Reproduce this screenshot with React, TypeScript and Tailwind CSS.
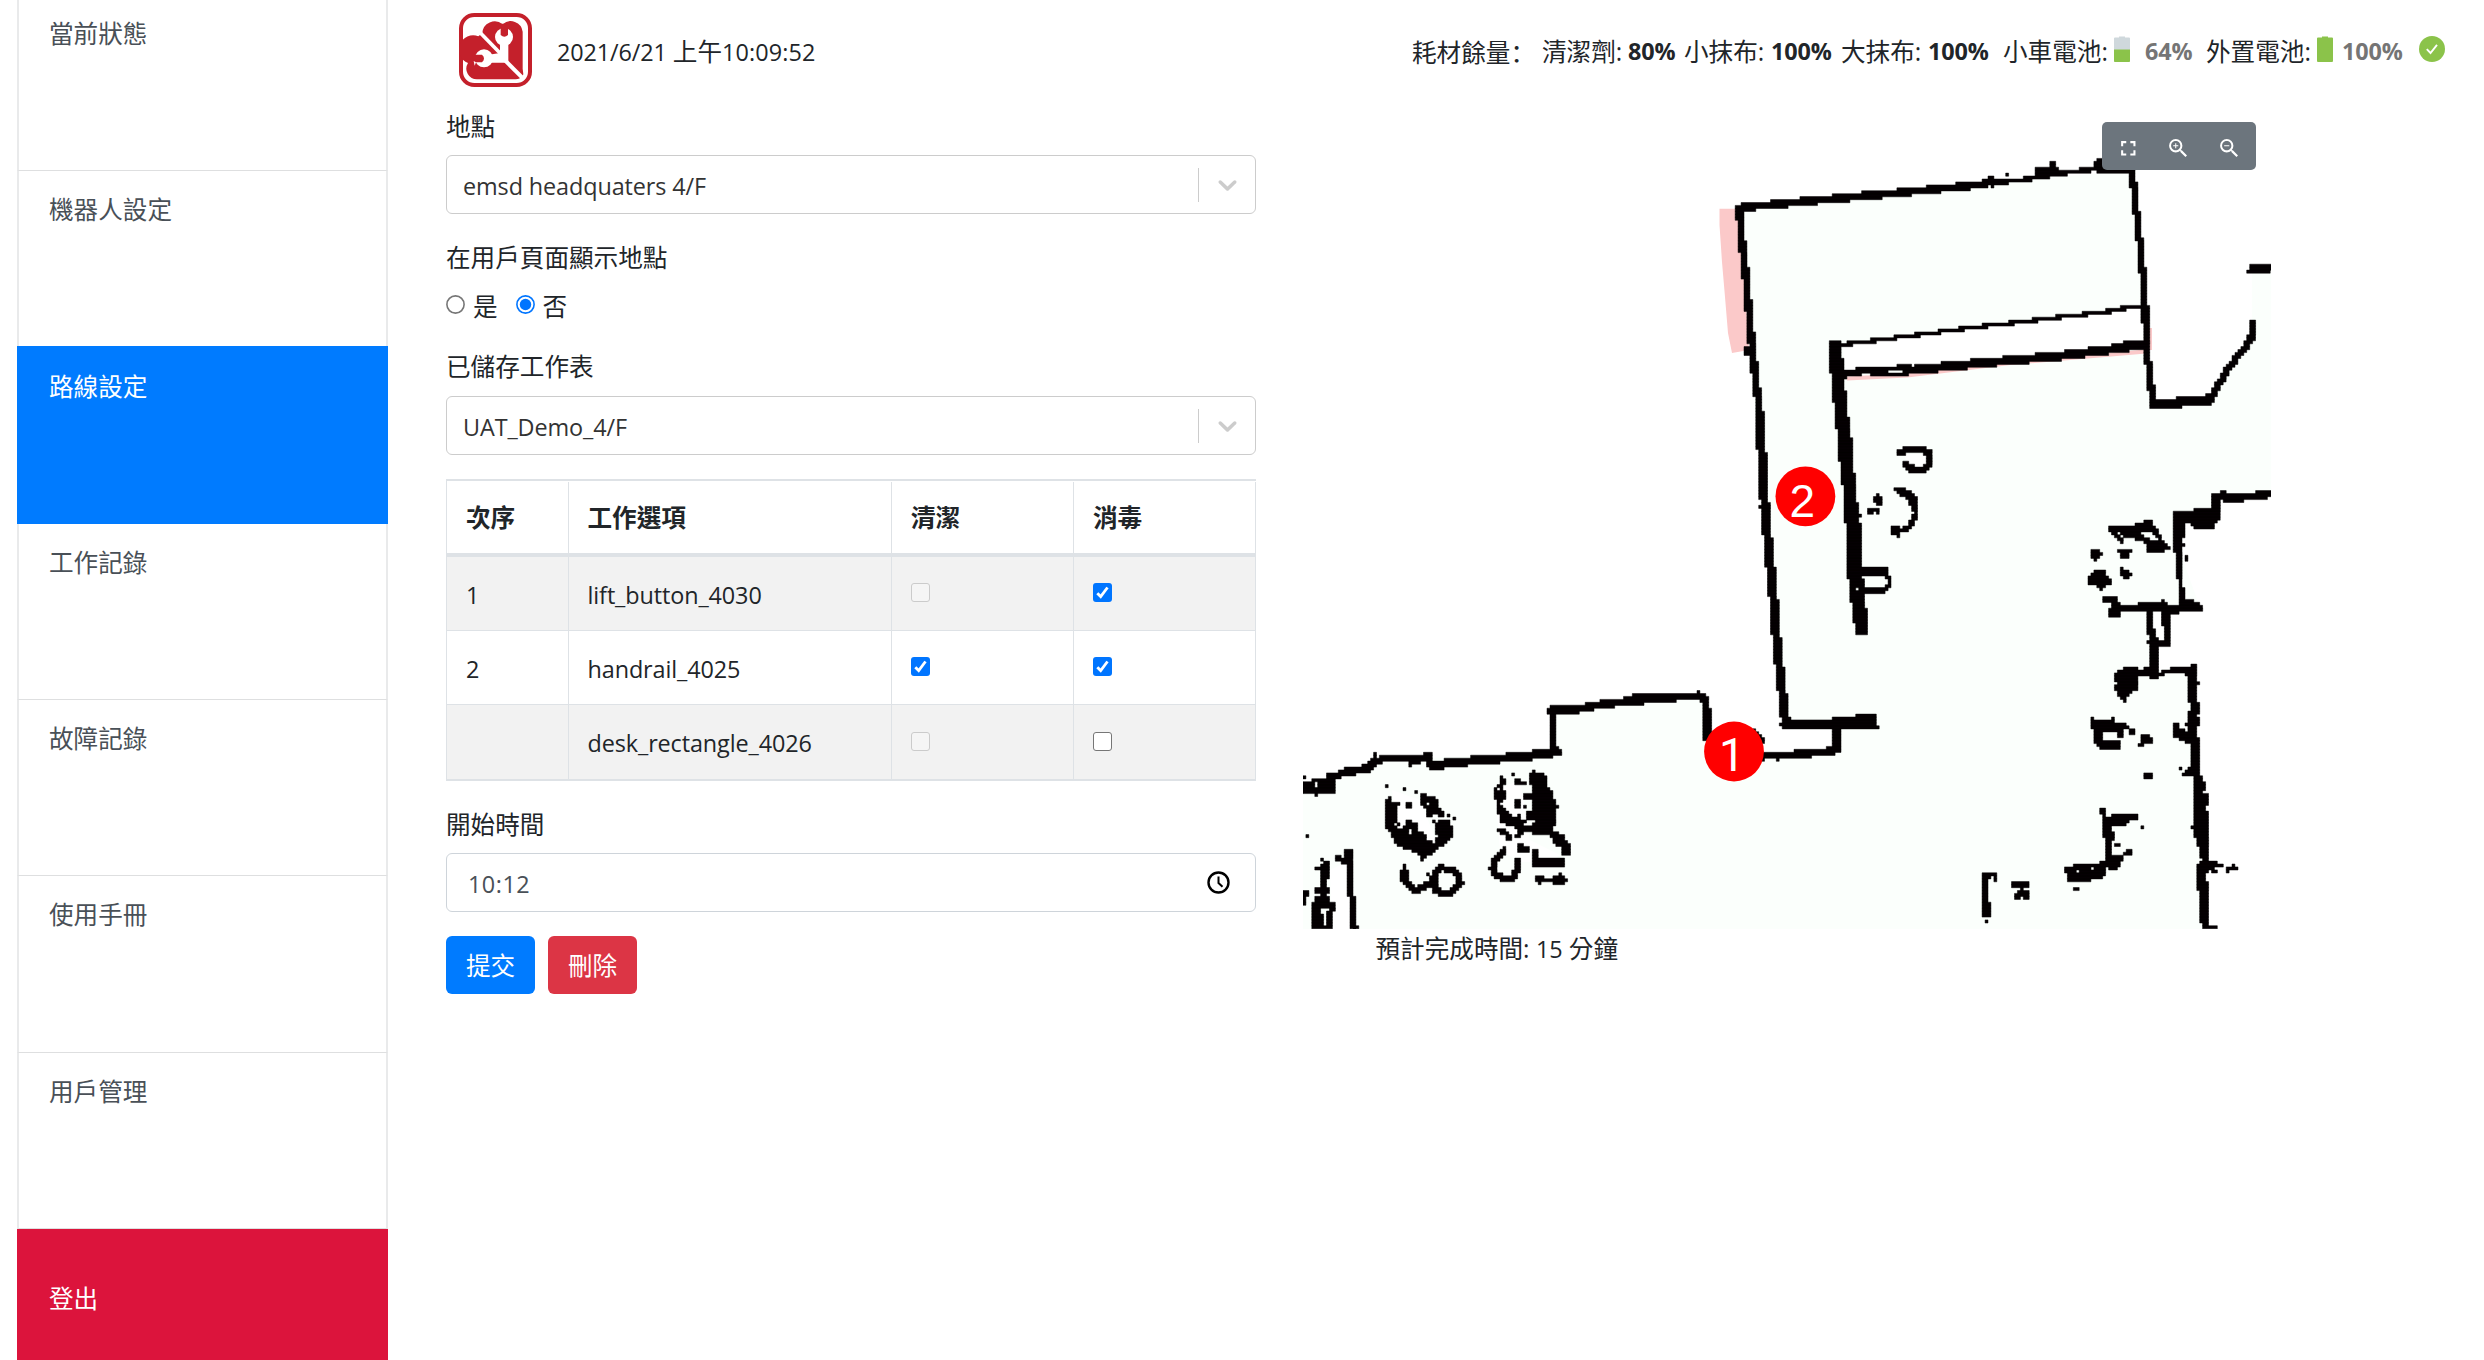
import React from "react";
import { MdFullscreen, MdZoomIn, MdZoomOut } from "react-icons/md";

/* ---------- floor map: shapes are rasterised onto the scanner's coarse grid ---------- */

type Layer = { ox: number; oy: number; kx: number; ky: number; shapes: string[] };

// L = wall (first number is its thickness), P = solid outline, R = box (x1 y1 x2 y2), D = single dot, E = cleared outline
const LAYERS: Layer[] = [
  {
    ox: 1700, oy: 110, kx: 0.3763, ky: 1 / 3,
    shapes: [
      "L 7 100 294 300 272 540 247 760 222",
      "L 4 760 220 860 209 960 190 1050 176",
      "L 6 1060 180 1150 184",
      "P 752 205 785 198 780 212 740 225",
      "P 888 170 930 168 932 153 950 153 945 175 957 178 940 202 890 204",
      "P 1045 155 1060 143 1075 143 1075 182 1050 182",
      "D 820 193", "D 433 245", "D 780 230",
      "L 6 1148 184 1160 310 1168 390 1182 560 1186 700 1195 800 1205 885",
      "R 1170 625 1182 641",
      "L 9 1207 883 1300 875 1355 868",
      "L 6 1358 865 1400 780 1450 710 1466 675",
      "L 3 1468 690 1468 635",
      "P 1448 492 1465 463 1520 463 1520 480 1500 492",
      "L 3.2 380 704 700 656 1130 598", "L 3 1120 593 1185 593",
      "L 8 388 790 555 781 700 764 950 738 1120 714 1188 702",
      "R 1125 690 1185 718", "R 525 760 560 785",
      "E 430 786 452 786 452 794 430 794", "E 500 777 540 777 540 786 500 786",
      "P 343 688 375 688 378 740 388 860 400 985 412 1125 420 1200 385 1200 378 1105 370 1020 360 935 352 845 345 755",
      "L 6.5 104 294 112 400 122 500 130 600 138 700 147 800 158 900 166 1020 172 1150",
      "R 114 712 140 740",
    ],
  },
  {
    ox: 1700, oy: 420, kx: 0.3763, ky: 1 / 3,
    shapes: [
      "P 360 -10 368 95 377 175 384 270 390 355 392 460 400 530 408 600 415 640 446 640 443 590 438 530 430 440 428 330 420 270 412 190 403 60 397 -10",
      "E 413 506 423 506 423 516 413 516", "D 425 283",
      "L 8.2 159 0 165 120 175 300 188 450 197 560 205 680 217 800 228 905",
      "R 154 256 164 266",
      "L 10 228 915 320 915", "P 320 898 415 890 415 886 468 886 470 918 476 922 390 930 320 928",
      "L 7 362 925 365 960 362 985",
      "L 6.5 530 98 550 90 590 87 610 100 610 135 590 150 560 146 545 130",
      "P 508 203 545 203 580 235 578 275 565 275 550 240",
      "L 4.5 573 283 560 315 540 332", "R 508 318 534 345", "D 528 350",
      "P 460 245 470 220 487 238 480 256", "P 445 264 478 264 478 284 465 274 448 284",
      "R 430 442 500 467", "L 4 490 460 504 480 500 500 488 515", "R 430 506 490 523",
      "P 1085 318 1180 312 1183 299 1200 299 1205 318 1220 335 1235 370 1252 386 1225 396 1190 396 1190 370 1160 358 1125 355 1122 370 1100 350 1090 335",
      "E 1166 342 1200 334 1217 360 1195 358", "E 1108 336 1120 340 1126 352 1115 350",
      "P 1037 388 1055 388 1068 403 1050 423 1038 412", "P 1110 390 1147 390 1140 413 1122 413",
      "P 1117 443 1149 460 1135 478 1118 464", "P 1030 475 1048 453 1076 452 1080 468 1100 483 1080 500 1065 513 1050 492 1036 496",
      "P 1068 535 1085 525 1108 525 1115 560 1165 558 1165 550 1225 550 1230 540 1245 545 1245 552 1270 552 1285 542 1312 542 1337 560 1337 577 1300 576 1290 570 1260 584 1235 585 1225 577 1120 577 1112 594 1090 594 1085 570 1095 550 1070 550",
      "L 4.5 1283 560 1282 510", "L 4 1273 395 1273 475", "L 4 1277 475 1280 520",
      "P 1258 273 1310 273 1310 265 1360 265 1362 220 1385 220 1387 212 1400 212 1400 220 1480 220 1480 211 1520 211 1520 228 1500 238 1450 238 1445 247 1395 247 1385 240 1383 292 1362 324 1320 327 1285 302 1285 340 1280 398 1258 398",
      "D 1286 345", "D 1286 375", "D 1292 408", "D 1294 420",
      "L 5.5 1193 575 1196 640", "L 8 1203 640 1207 750", "P 1228 575 1250 575 1250 683 1218 683 1232 655",
      "D 1192 668", "D 1222 665",
    ],
  },
  {
    ox: 1290, oy: 660, kx: 1 / 2.8, ky: 1 / 3,
    shapes: [
      "P 36 368 60 368 60 355 105 355 105 340 147 338 147 352 130 352 130 390 120 399 36 399",
      "E 69 362 81 362 81 386 69 386", "D 75 402", "D 37 350",
      "L 7.5 145 340 170 334 215 326 235 305", "L 3 240 296 240 285",
      "L 6 235 302 290 294 328 291", "L 7 340 300 390 292", "R 372 277 396 288", "D 336 314",
      "L 8 390 308 410 315 480 307", "L 8 400 315 480 306 550 298 650 290 730 278 748 275",
      "L 6 737 275 735 150", "R 730 258 752 290", "L 7.5 732 152 820 145 880 131 985 121",
      "L 6.5 960 115 1070 113 1155 107", "D 1143 99", "L 6.5 1158 112 1169 150 1168 235",
      "L 4 1298 214 1325 245", "L 6.5 1320 289 1390 284 1450 280 1530 270", "D 1362 297", "D 1454 290",
      "L 6.5 1530 205 1536 265",
    ],
  },
  {
    ox: 1840, oy: 660, kx: 1 / 3, ky: 1 / 3,
    shapes: [
      "P 820 45 840 28 880 20 905 28 930 20 930 0 955 0 960 35 990 30 990 18 1050 18 1055 8 1072 8 1070 60 1082 62 1080 76 1070 80 1070 122 1080 125 1080 155 1068 165 1080 178 1080 192 1068 200 1070 230 1080 235 1080 345 1090 350 1085 370 1098 366 1097 380 1090 395 1107 408 1107 430 1098 435 1105 475 1105 600 1132 606 1150 618 1110 630 1098 640 1107 720 1107 800 1135 800 1135 810 1090 810 1080 770 1082 690 1072 690 1072 615 1085 600 1072 545 1062 520 1062 400 1065 360 1053 345 1028 345 1050 322 1053 250 1030 245 1003 230 1003 187 1015 187 1018 205 1040 214 1045 200 1030 190 1048 180 1045 165 1057 130 1045 128 1045 60 1035 35 985 35 975 42 955 50 935 62 925 50 895 50 888 75 902 95 885 92 865 110 853 124 832 110 830 95 815 82 828 70",
      "P 752 168 760 178 815 178 817 168 823 185 855 188 868 202 850 205 848 230 832 228 828 218 785 212 785 235 800 240 840 240 838 267 780 265 762 245 762 205 752 200",
      "R 868 204 885 221", "P 893 258 905 245 905 228 918 222 938 240 934 250 915 250 910 258",
      "R 910 338 938 356", "D 1022 323", "D 1058 502",
      "P 778 458 786 444 795 444 795 470 812 470 815 462 894 462 892 480 868 482 855 498 812 498 812 515 822 518 820 542 811 542 811 588 848 588 848 602 830 630 800 625 790 657 750 657 750 666 680 666 680 640 670 628 685 613 690 625 705 615 770 615 795 600 798 590 796 532 787 530 787 465",
      "E 706 631 716 631 716 640 706 640", "E 751 622 761 622 761 632 751 632",
      "R 822 550 840 560", "P 850 586 860 569 876 569 876 586", "D 906 503", "P 697 674 706 680 715 685 715 693 697 693",
      "P 430 640 475 640 472 650 465 665 457 650 447 655 447 730 457 733 455 765 445 774 421 774 430 762", "D 443 787",
      "P 512 682 520 667 564 667 564 684 550 688 564 695 564 720 545 713 530 720 520 705 530 695 545 690 540 683",
      "P 1160 640 1160 625 1170 622 1180 613 1196 630 1178 630", "R 1116 631 1135 640",
    ],
  },
  {
    ox: 1290, oy: 740, kx: 1 / 3, ky: 1 / 3,
    shapes: [
      "P 290 178 300 168 310 190 327 190 318 220 325 245 333 272 340 265 350 240 368 235 370 250 385 255 385 270 405 285 415 300 430 308 445 290 432 275 440 262 425 243 445 245 460 235 480 245 492 275 490 290 470 300 465 320 440 325 425 345 400 352 380 335 340 328 315 305 300 280 290 270",
      "P 388 192 390 165 410 160 418 170 440 175 445 200 458 210 458 232 430 222 415 238 408 210",
      "E 355 268 368 268 368 280 355 280", "E 315 245 325 250 328 268 318 262", "E 400 195 408 200 420 200 418 190",
      "D 293 137", "R 335 143 352 151", "D 375 155", "R 350 187 361 202", "D 473 225", "D 490 238", "D 400 358", "D 347 378",
      "P 380 335 410 340 400 355 390 350",
      "L 6 343 390 344 420 360 440 378 450 400 440 420 430 434 405 450 380",
      "L 6 470 387 495 392 508 418 503 440 485 458 455 460 440 445 436 420",
      "R 430 440 448 460",
      "D 518 431", "D 410 405", "D 378 458",
      "P 730 88 745 98 768 105 770 135 785 155 797 190 805 200 797 210 797 250 790 270 815 282 842 315 838 348 820 348 815 325 795 310 778 285 730 282 722 262 735 245 740 225 722 235 725 180 730 150 718 130 720 100",
      "P 612 155 632 145 645 150 645 178 632 190 640 205 655 210 660 220 678 235 690 215 695 235 708 240 700 262 680 265 655 255 632 245 622 215 618 185",
      "P 630 108 645 118 642 140 612 152 612 145 630 132", "P 675 115 690 120 708 130 700 138 675 132",
      "P 700 160 725 165 725 182 705 180", "R 673 178 690 202", "D 704 200", "D 668 102",
      "P 708 212 725 218 735 240 712 240", "L 4.5 684 285 700 265 725 272", "L 4.5 632 270 648 280 660 296",
      "R 682 312 704 335", "R 700 318 716 335",
      "L 6 640 332 618 355 606 385 615 403 640 417 665 413 681 395 680 360", "D 597 383",
      "R 727 358 825 382", "R 727 330 742 382",
      "R 736 410 760 424", "D 748 431", "R 760 416 830 424", "R 792 410 825 431", "D 812 404",
      "L 7 108 372 103 410 98 480", "D 97 360", "D 53 288", "R 78 383 100 390", "R 76 442 118 462", "R 76 468 120 490",
      "P 60 495 75 485 135 490 138 503 128 515 130 568 66 568 66 505", "E 94 502 118 502 112 512 112 560 104 560 104 525 94 520",
      "L 5.5 183 340 183 465", "L 5.5 192 480 193 566", "R 140 347 150 362", "R 150 352 190 368", "R 166 330 190 350", "D 204 564",
      "R 38 455 58 472", "R 38 472 48 495",
    ],
  },
];

const CELL = 2.94;
const MAP_X = 1303;
const MAP_Y = 129;
const COLS = 330;
const ROWS = 273;

function inside(px: number, py: number, pts: number[][]) {
  let hit = false;
  for (let i = 0, j = pts.length - 1; i < pts.length; j = i++) {
    const [xi, yi] = pts[i];
    const [xj, yj] = pts[j];
    if (yi > py !== yj > py && px < ((xj - xi) * (py - yi)) / (yj - yi) + xi) hit = !hit;
  }
  return hit;
}

function nearSegment(px: number, py: number, a: number[], b: number[], r: number) {
  const dx = b[0] - a[0];
  const dy = b[1] - a[1];
  const len = dx * dx + dy * dy || 1;
  const t = Math.max(0, Math.min(1, ((px - a[0]) * dx + (py - a[1]) * dy) / len));
  return Math.hypot(px - a[0] - t * dx, py - a[1] - t * dy) <= r;
}

function buildWalls() {
  const grid = new Uint8Array(COLS * ROWS);
  for (const { ox, oy, kx, ky, shapes } of LAYERS) {
    for (const shape of shapes) {
      const [kind, ...rest] = shape.split(" ");
      const n = rest.map(Number);
      const r = kind === "L" ? n.shift()! / 2 + 0.2 : 0;
      let pts: number[][] = [];
      for (let i = 0; i < n.length; i += 2) pts.push([ox + n[i] * kx, oy + n[i + 1] * ky]);
      if (kind === "D") {
        const c = Math.floor((pts[0][0] - MAP_X) / CELL);
        const q = Math.floor((pts[0][1] - MAP_Y) / CELL);
        if (c >= 0 && q >= 0 && c < COLS && q < ROWS) grid[q * COLS + c] = 1;
        continue;
      }
      if (kind === "R") {
        const [[x1, y1], [x2, y2]] = pts;
        pts = [[x1, y1], [x2, y1], [x2, y2], [x1, y2]];
      }
      const xs = pts.map((p) => p[0]);
      const ys = pts.map((p) => p[1]);
      const c0 = Math.max(0, Math.floor((Math.min(...xs) - r - MAP_X) / CELL));
      const c1 = Math.min(COLS - 1, Math.ceil((Math.max(...xs) + r - MAP_X) / CELL));
      const q0 = Math.max(0, Math.floor((Math.min(...ys) - r - MAP_Y) / CELL));
      const q1 = Math.min(ROWS - 1, Math.ceil((Math.max(...ys) + r - MAP_Y) / CELL));
      for (let q = q0; q <= q1; q++) {
        for (let c = c0; c <= c1; c++) {
          const x = MAP_X + (c + 0.5) * CELL;
          const y = MAP_Y + (q + 0.5) * CELL;
          let hit = false;
          if (kind === "L") {
            for (let i = 1; i < pts.length && !hit; i++) hit = nearSegment(x, y, pts[i - 1], pts[i], r);
          } else {
            hit = inside(x, y, pts);
          }
          if (hit) grid[q * COLS + c] = kind === "E" ? 0 : 1;
        }
      }
    }
  }
  let d = "";
  const f = (v: number) => v.toFixed(1);
  for (let q = 0; q < ROWS; q++) {
    for (let c = 0; c < COLS; c++) {
      if (!grid[q * COLS + c]) continue;
      let e = c;
      while (e < COLS && grid[q * COLS + e]) e++;
      d += `M${f(MAP_X + c * CELL)} ${f(MAP_Y + q * CELL)}h${f((e - c) * CELL)}v3.1h${f(-(e - c) * CELL)}z`;
      c = e;
    }
  }
  return d;
}

const WALLS = buildWalls();

function Marker({ x, y, tx, ty, n, family }: { x: number; y: number; tx: number; ty: number; n: string; family: string }) {
  return (
    <g>
      <circle cx={x} cy={y} r="29.9" fill="#ff0000" />
      <text x={tx} y={ty} textAnchor="middle" fill="#fff" fontSize="46" fontFamily={family}>
        {n}
      </text>
    </g>
  );
}

function FloorMap() {
  return (
    <svg className="block h-[800px] w-[968px]" viewBox="1303 129 968 800">
      <path
        fill="#fbfffc"
        d="M1737 208L2133 170L2153 403L2210 398L2252 340L2252 273L2271 270V493L2215 497L2210 520L2180 524L2183 560L2198 602L2153 612V670L2191 668L2198 748L2202 793L2207 929H1303V790L1338 782L1376 760L1552 753V710L1704 697L1708 738L1765 755L1836 750L1838 730L1785 727L1756 420Z"
      />
      <path fill="#fff" d="M1843 345L2145 308L2147 345L1845 373ZM1904 454H1926V470L1910 472Z" />
      <path fill="#fff" d="M1330 870L1350 860L1352 929H1332ZM1392 790L1420 800L1440 850L1400 840ZM1495 790L1520 780L1530 840L1560 855L1550 862H1520L1500 850Z" />
      <path fill="#fbc9c9" d="M1719.500 208.700H1737L1741 227L1749 350L1732 353L1728 333L1725 297L1722 262L1719.500 225Z" />
      <path stroke="#fbc9c9" strokeWidth="4" fill="none" d="M1847 378.500L1907 375.500L2010 363L2146 351.500" />
      <path fill="#fbc9c9" d="M2148 328H2152V350H2148Z" />
      <path d={WALLS} fill="#050003" stroke="#050003" strokeWidth="0.5" />
      <Marker x={1805.4} y={496.3} tx={1802.4} ty={516.5} n="2" family="Liberation Sans, Arial, sans-serif" />
      <Marker x={1734} y={751.5} tx={1732} ty={771} n="1" family="Roboto, sans-serif" />
    </svg>
  );
}

/* ---------- small pieces ---------- */

function Latin({ children, className = "" }: { children: React.ReactNode; className?: string }) {
  return <span className={`text-[23.4px] tracking-[-0.1px] ${className}`}>{children}</span>;
}

function Logo() {
  return (
    <svg className="h-[74px] w-[73px] shrink-0" viewBox="57 38 219 222">
      <rect x="63" y="44" width="207" height="210" rx="40" fill="#fff" stroke="#c4202b" strokeWidth="12" />
      <path
        fill="#c4202b"
        d="M127 99A37 37 0 0 1 188 72A36 36 0 0 1 248 94V205L250 222Q246 235 228 237H112A32 32 0 0 1 84 188A40 40 0 0 1 115 108Z"
      />
      <path stroke="#fff" strokeWidth="11" d="M112 88L185 163" />
      <path stroke="#fff" strokeWidth="12" d="M190 175L252 237" />
      <circle cx="192" cy="110" r="27" fill="#fff" />
      <circle cx="132" cy="174" r="27" fill="#fff" />
      <path fill="#fff" d="M180 120H205V187H142V164L180 158Z" />
      <path fill="#c4202b" d="M182 70H204V104Q193 114 182 104Z" />
      <path fill="#c4202b" d="M95 163H126Q138 174 126 186H106L100 178Z" />
      <path fill="#fff" d="M101 182L108 186L104 196Z" />
    </svg>
  );
}

function Battery({ level }: { level: number }) {
  const top = 26 - 25 * level;
  return (
    <svg className="h-[26px] w-4 shrink-0" viewBox="0 0 16 26">
      <path fill={level === 1 ? "#8bc34a" : "#cfd8dc"} d="M5 0.500H11V1.500H15Q16 1.500 16 2.500V25Q16 26 15 26H1Q0 26 0 25V2.500Q0 1.500 1 1.500H5Z" />
      {level < 1 && <path fill="#8bc34a" d={`M0 ${top}H16V25Q16 26 15 26H1Q0 26 0 25Z`} />}
    </svg>
  );
}

function Select({ value }: { value: string }) {
  return (
    <div className="flex h-[59px] w-full items-center rounded-[6px] border-[1.5px] border-[#cccccc] bg-white text-[#333]">
      <div className="flex-1 pl-[16px] pt-[3px]">
        <Latin>{value}</Latin>
      </div>
      <div className="h-[34px] w-[1.5px] bg-[#cccccc]" />
      <div className="flex w-[56px] justify-center">
        <svg className="h-[31px] w-[31px]" viewBox="0 0 20 20" fill="#ccc">
          <path d="M4.516 7.548c0.436-0.446 1.043-0.481 1.576 0l3.908 3.747 3.908-3.747c0.533-0.481 1.141-0.446 1.574 0 0.436 0.445 0.408 1.197 0 1.615-0.406 0.418-4.695 4.502-4.695 4.502-0.217 0.223-0.502 0.335-0.787 0.335s-0.570-0.112-0.789-0.335c0 0-4.287-4.084-4.695-4.502s-0.436-1.170 0-1.615z" />
        </svg>
      </div>
    </div>
  );
}

function Radio({ on }: { on?: boolean }) {
  return (
    <svg className="h-[19px] w-[19px] shrink-0" viewBox="0 0 19 19">
      <circle cx="9.500" cy="9.500" r="8.600" fill="#fff" stroke={on ? "#0075ff" : "#767676"} strokeWidth="1.600" />
      {on && <circle cx="9.500" cy="9.500" r="5.700" fill="#0075ff" />}
    </svg>
  );
}

type Check = "on" | "off" | "disabled";

function Checkbox({ state }: { state: Check }) {
  if (state === "on") {
    return (
      <svg className="h-[19px] w-[19px]" viewBox="0 0 19 19">
        <rect width="19" height="19" rx="3" fill="#0075ff" />
        <path d="M4.300 10.200L7.700 13.600L14.500 4.500" fill="none" stroke="#fff" strokeWidth="2.800" />
      </svg>
    );
  }
  return (
    <div
      className={
        state === "off"
          ? "h-[19px] w-[19px] rounded-[3px] border-[1.5px] border-[#767676] bg-white"
          : "h-[19px] w-[19px] rounded-[3px] border-[1.5px] border-[#cbcbcb] bg-[#f5f5f5]"
      }
    />
  );
}

const NAV = ["當前狀態", "機器人設定", "路線設定", "工作記錄", "故障記錄", "使用手冊", "用戶管理"];

const ROWS_DATA: { no: string; name: string; clean: Check; disinfect: Check }[] = [
  { no: "1", name: "lift_button_4030", clean: "disabled", disinfect: "on" },
  { no: "2", name: "handrail_4025", clean: "on", disinfect: "on" },
  { no: "", name: "desk_rectangle_4026", clean: "disabled", disinfect: "off" },
];

function Sidebar() {
  return (
    <nav className="-mt-[5px] ml-[17px] flex h-[1365px] w-[370.5px] shrink-0 flex-col text-[#495057]">
      {NAV.map((label) => (
        <div
          key={label}
          className={
            label === "路線設定"
              ? "-mt-[2px] h-[178.3px] shrink-0 bg-[#007bff] pl-[32px] pt-[22px] text-white"
              : "h-[176.3px] shrink-0 border-x-2 border-b-[1.5px] border-x-[#e9eaeb] border-b-[#dedfe0] pl-[30px] pt-[20px]"
          }
        >
          {label}
        </div>
      ))}
      <div className="flex-1 bg-[#dc143c] pl-[32px] pt-[51px] text-white">登出</div>
    </nav>
  );
}

function Status() {
  return (
    <div className="flex h-[37px] items-center whitespace-nowrap">
      <span className="w-[130px]">
        耗材餘量<span className="font-['Noto_Sans_CJK_SC',sans-serif]" lang="zh-CN">：</span>
      </span>
      <span className="w-[86px]">清潔劑:</span>
      <Latin className="w-[56px] font-bold">80%</Latin>
      <span className="w-[87px]">小抹布:</span>
      <Latin className="w-[70px] font-bold">100%</Latin>
      <span className="w-[87px]">大抹布:</span>
      <Latin className="w-[75px] font-bold">100%</Latin>
      <span className="w-[111px]">小車電池:</span>
      <div className="-mt-[5px] w-[31px]">
        <Battery level={0.5} />
      </div>
      <Latin className="w-[61px] font-bold text-[#757575]">64%</Latin>
      <span className="w-[111px]">外置電池:</span>
      <div className="-mt-[5px] w-[25px]">
        <Battery level={1} />
      </div>
      <Latin className="w-[77px] font-bold text-[#757575]">100%</Latin>
      <svg className="-mt-[5px] h-[26px] w-[26px]" viewBox="0 0 26 26">
        <circle cx="13" cy="13" r="13" fill="#8bc34a" />
        <path d="M7.800 13.200L11.500 17L18 8.800" fill="none" stroke="#fff" strokeWidth="1.900" />
      </svg>
    </div>
  );
}

function WorkTable() {
  const grid = "grid grid-cols-[121.5px_323.5px_182px_1fr]";
  const cell = "flex items-center border-r-[1.5px] border-[#dee2e6] pl-[19px]";
  const checkCell = "flex items-center border-r-[1.5px] border-[#dee2e6] pb-[2px] pl-[18.500px]";
  return (
    <div className="mt-6 h-[302px] border-y-2 border-l-[1.5px] border-[#dee2e6]">
      <div className={`${grid} h-[76px] border-b-4 border-[#dee2e6] pt-px font-bold`}>
        {["次序", "工作選項", "清潔", "消毒"].map((h) => (
          <div key={h} className={cell}>
            {h}
          </div>
        ))}
      </div>
      {ROWS_DATA.map((r, i) => (
        <div
          key={r.name}
          className={
            i % 2 === 0
              ? `${grid} h-[74px] border-[#dee2e6] bg-[#f2f2f2] ${i < 2 ? "border-b-[1.5px]" : ""}`
              : `${grid} h-[74px] border-b-[1.5px] border-[#dee2e6]`
          }
        >
          <div className={cell}>
            <Latin className="pt-[3px]">{r.no}</Latin>
          </div>
          <div className={cell}>
            <Latin className="pt-[3px]">{r.name}</Latin>
          </div>
          <div className={checkCell}>
            <Checkbox state={r.clean} />
          </div>
          <div className={checkCell}>
            <Checkbox state={r.disinfect} />
          </div>
        </div>
      ))}
    </div>
  );
}

export default function App() {
  return (
    <div className="flex h-[1360px] w-[2484px] overflow-hidden bg-white font-['Open_Sans','Noto_Sans_CJK_TC',sans-serif] text-[24.6px] leading-[37px] text-[#212529]">
      <Sidebar />
      <main className="ml-[58.5px] flex flex-1 flex-col">
        <header className="flex h-[108px] shrink-0 items-start pl-[13px]">
          <div className="mt-[13px]">
            <Logo />
          </div>
          <div className="ml-[25px] mt-[33px] w-[855px]">
            <Latin>2021/6/21 </Latin>上午<Latin className="tracking-[0.1px]">10:09:52</Latin>
          </div>
          <div className="mt-[33px]">
            <Status />
          </div>
        </header>

        <div className="flex flex-1">
          <form className="w-[810px] shrink-0">
            <div className="mb-[10px] h-[37px]">地點</div>
            <Select value="emsd headquaters 4/F" />
            <div className="mt-[25px] h-[37px]">在用戶頁面顯示地點</div>
            <div className="mt-[10px] flex h-[37px] items-center">
              <Radio />
              <span className="ml-[8px] pt-[3px]">是</span>
              <span className="ml-[18px] flex">
                <Radio on />
              </span>
              <span className="ml-[8px] pt-[3px]">否</span>
            </div>
            <div className="mb-[11px] mt-[25px] h-[37px]">已儲存工作表</div>
            <Select value="UAT_Demo_4/F" />
            <WorkTable />
            <div className="mt-[25px] h-[37px]">開始時間</div>
            <div className="mt-[10px] flex h-[59px] items-center justify-between rounded-[6px] border-[1.5px] border-[#ced4da] pl-[21px] pr-[25px] text-[#495057]">
              <Latin className="pt-[3px] tracking-[0.5px]">10:12</Latin>
              <svg className="h-[23px] w-[23px]" viewBox="0 0 23 23" fill="none" stroke="#000">
                <circle cx="11.500" cy="11.500" r="10" strokeWidth="2.400" />
                <path d="M11.500 5.500V12L15.500 15.700" strokeWidth="2" />
              </svg>
            </div>
            <div className="mt-6 flex gap-[13px] text-white">
              <button type="button" className="h-[58px] w-[89px] rounded-[6px] bg-[#007bff] pt-px">
                提交
              </button>
              <button type="button" className="h-[58px] w-[89px] rounded-[6px] bg-[#dc3545] pt-px">
                刪除
              </button>
            </div>
          </form>

          <section className="relative ml-[46.500px] w-[968px] pt-[21px]">
            <FloorMap />
            <div className="absolute right-[15px] top-[14px] flex h-[48px] w-[154px] items-center justify-center gap-[26px] rounded-[5px] bg-[#6c757d] pt-[5px] text-[24.6px] text-white">
              <MdFullscreen />
              <MdZoomIn />
              <MdZoomOut />
            </div>
            <div className="ml-[73px] mt-px">
              預計完成時間: <Latin>15</Latin> 分鐘
            </div>
          </section>
        </div>
      </main>
    </div>
  );
}
